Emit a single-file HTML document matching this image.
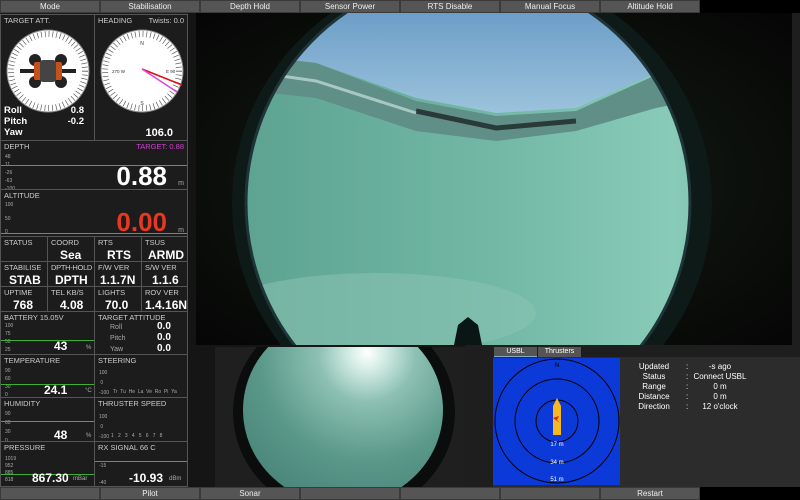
<!DOCTYPE html>
<html><head><meta charset="utf-8"><style>
*{margin:0;padding:0;box-sizing:border-box}
body{width:800px;height:500px;background:#000;position:relative;overflow:hidden;font-family:"Liberation Sans",sans-serif;color:#fff}
.a{position:absolute}
.btn{position:absolute;height:13px;background:#555;border:1px solid #3a3a3a;color:#eee;font-size:8px;text-align:center;line-height:11px}
.c{position:absolute;background:#1c1c1c;border:1px solid #555}
.l{position:absolute;left:3px;top:1px;font-size:7.5px;color:#ccc;white-space:nowrap}
.v{position:absolute;font-weight:bold;font-size:12px;color:#fff;white-space:nowrap}
.s{position:absolute;font-size:5px;color:#aaa;white-space:nowrap}
.g{position:absolute;height:1px;background:#3cb030}
</style></head><body>
<div class="btn" style="left:0;top:0;width:100px">Mode</div>
<div class="btn" style="left:100px;top:0;width:100px">Stabilisation</div>
<div class="btn" style="left:200px;top:0;width:100px">Depth Hold</div>
<div class="btn" style="left:300px;top:0;width:100px">Sensor Power</div>
<div class="btn" style="left:400px;top:0;width:100px">RTS Disable</div>
<div class="btn" style="left:500px;top:0;width:100px">Manual Focus</div>
<div class="btn" style="left:600px;top:0;width:100px">Altitude Hold</div>
<div class="btn" style="left:0;top:487px;width:100px"></div>
<div class="btn" style="left:100px;top:487px;width:100px">Pilot</div>
<div class="btn" style="left:200px;top:487px;width:100px">Sonar</div>
<div class="btn" style="left:300px;top:487px;width:100px"></div>
<div class="btn" style="left:400px;top:487px;width:100px"></div>
<div class="btn" style="left:500px;top:487px;width:100px"></div>
<div class="btn" style="left:600px;top:487px;width:100px">Restart</div>

<!-- main video -->
<div class="a" style="left:188px;top:13px;width:612px;height:334px;background:#141414"></div>
<div class="a" style="left:196px;top:13px;width:596px;height:332px;overflow:hidden;background:radial-gradient(ellipse at 50% 50%,#182018 0%,#0c100c 60%,#050505 100%)">
 <div class="a" style="left:36px;top:-45px;width:480px;height:470px;border-radius:50%;background:#0d1a18"></div>
 <svg class="a" style="left:0;top:0" width="596" height="332">
  <defs><clipPath id="cc"><ellipse cx="272" cy="190" rx="222" ry="228"/></clipPath>
  <linearGradient id="wg" x1="0" x2="1" y1="0" y2="0"><stop offset="0" stop-color="#5a9f8e"/><stop offset="0.5" stop-color="#72b8a5"/><stop offset="0.8" stop-color="#88cbb8"/><stop offset="1" stop-color="#6fb09e"/></linearGradient>
  <linearGradient id="sk" x1="0" x2="0" y1="0" y2="1"><stop offset="0" stop-color="#6d9ec8"/><stop offset="1" stop-color="#9cc3dc"/></linearGradient></defs>
  <g clip-path="url(#cc)">
   <rect x="0" y="0" width="596" height="332" fill="url(#wg)"/>
   <path d="M40 0 L560 0 L560 30 L460 60 L380 95 L300 100 L220 85 L120 50 L40 40Z" fill="url(#sk)"/>
   <path d="M30 40 L120 50 L220 88 L300 103 L380 98 L460 62 L560 30 L560 75 L460 95 L380 118 L300 128 L220 118 L120 85 L30 75Z" fill="#5f8f86"/>
   <path d="M220 98 L300 115 L380 108" stroke="#2a3a38" stroke-width="5" fill="none"/>
   <path d="M30 55 L120 68 L220 100" stroke="#a8c8c0" stroke-width="3" fill="none"/>
   <ellipse cx="180" cy="300" rx="160" ry="40" fill="#8ec4b4" opacity="0.5"/>
  </g>
  <ellipse cx="272" cy="190" rx="222" ry="228" fill="none" stroke="#1f3438" stroke-width="3"/>
  <path d="M258 332 L262 312 L272 304 L282 312 L286 332Z" fill="#0a1614"/>
 </svg>
</div>
<div class="a" style="left:792px;top:13px;width:8px;height:334px;background:#1e1e1e"></div>

<!-- small video -->
<div class="a" style="left:188px;top:345px;width:277px;height:142px;background:#151515"></div>
<div class="a" style="left:215px;top:347px;width:250px;height:140px;background:#1e1f1e;overflow:hidden">
 <div class="a" style="left:18px;top:-40px;width:222px;height:210px;border-radius:50%;background:#0b0d0d"></div>
 <div class="a" style="left:28px;top:-32px;width:200px;height:190px;border-radius:50%;background:radial-gradient(circle at 62% 20%,#ffffff 0%,#d8efe8 8%,#8cc0b2 25%,#5a988a 55%,#3f7a6e 100%)"></div>
</div>

<!-- USBL panel -->
<div class="a" style="left:465px;top:345px;width:335px;height:142px;background:#1e1e1e"></div>
<div class="a" style="left:493px;top:357px;width:307px;height:130px;background:#2c2c2c"></div>
<div class="a" style="left:494px;top:347px;width:43px;height:10px;background:#555;border-bottom:1px solid #8ab;font-size:7px;text-align:center;line-height:10px">USBL</div>
<div class="a" style="left:538px;top:347px;width:43px;height:10px;background:#555;font-size:7px;text-align:center;line-height:10px">Thrusters</div>
<svg class="a" style="left:493px;top:358px" width="127" height="127" viewBox="0 0 127 127">
 <rect width="127" height="127" fill="#0b3ad8"/>
 <g fill="none" stroke="#000" stroke-width="1"><circle cx="64" cy="63" r="62"/><circle cx="64" cy="63" r="42"/><circle cx="64" cy="63" r="21"/></g>
 <path d="M64 40 L68 48 L68 77 L60 77 L60 48 Z" fill="#f5b820"/>
 <path d="M60 60 L66 58 L64 62 L67 65 Z" fill="#e02020"/>
 <text x="64" y="9" font-size="6" fill="#000" text-anchor="middle" font-family="Liberation Sans">N</text>
 <g font-size="6" fill="#fff" text-anchor="middle" font-family="Liberation Sans"><text x="64" y="88">17 m</text><text x="64" y="106">34 m</text><text x="64" y="123">51 m</text></g>
</svg>
<div class="a" style="left:630px;top:362px;font-size:8px;line-height:10px;color:#fff;text-align:center;width:48px">Updated<br>Status<br>Range<br>Distance<br>Direction</div>
<div class="a" style="left:686px;top:362px;font-size:8px;line-height:10px;color:#fff">:<br>:<br>:<br>:<br>:</div>
<div class="a" style="left:690px;top:362px;font-size:8px;line-height:10px;color:#fff;text-align:center;width:60px;white-space:nowrap">-s ago<br>Connect USBL<br>0 m<br>0 m<br>12 o'clock</div>

<!-- left panel -->
<div class="a" style="left:0;top:13px;width:188px;height:474px;background:#1c1c1c"></div>
<div class="c" style="left:0;top:14px;width:95px;height:127px"><div class="l">TARGET ATT.</div>
 <svg class="a" style="left:5px;top:14px" width="84" height="84"><circle cx="42" cy="42" r="41" fill="#fff" stroke="#888"/><circle cx="42" cy="42" r="37" fill="none" stroke="#444" stroke-width="6" stroke-dasharray="0.6 3.2"/>
 <rect x="14" y="40" width="56" height="4" fill="#222"/><circle cx="29" cy="31" r="6" fill="#222"/><circle cx="55" cy="31" r="6" fill="#222"/><circle cx="29" cy="53" r="6" fill="#222"/><circle cx="55" cy="53" r="6" fill="#222"/><rect x="28" y="33" width="28" height="18" rx="2" fill="#c8501c"/><rect x="34" y="31" width="16" height="22" rx="3" fill="#444"/></svg>
 <div class="v" style="left:3px;top:90px;font-size:9.5px;line-height:11px">Roll<br>Pitch<br>Yaw</div>
 <div class="v" style="right:10px;top:90px;font-size:9.5px;line-height:11px;text-align:right">0.8<br>-0.2</div>
</div>
<div class="c" style="left:94px;top:14px;width:94px;height:127px"><div class="l">HEADING</div><div class="l" style="left:auto;right:3px">Twists: 0.0</div>
 <svg class="a" style="left:5px;top:14px" width="84" height="84"><circle cx="42" cy="42" r="41" fill="#fff" stroke="#888"/><circle cx="42" cy="42" r="37" fill="none" stroke="#444" stroke-width="6" stroke-dasharray="0.6 3.2"/>
 <text x="42" y="16" font-size="5" text-anchor="middle" fill="#333">N</text><text x="12" y="44" font-size="4.5" fill="#333">270 W</text><text x="66" y="44" font-size="4.5" fill="#333">E 90</text><text x="42" y="76" font-size="5" text-anchor="middle" fill="#333">S</text>
 <line x1="42" y1="40" x2="82" y2="56" stroke="#e01010" stroke-width="1.5"/><line x1="42" y1="40" x2="77" y2="63" stroke="#e040e0" stroke-width="1.5"/></svg>
 <div class="v" style="right:14px;top:112px;font-size:11px">106.0</div>
</div>
<div class="c" style="left:0;top:140px;width:188px;height:50px"><div class="l">DEPTH</div><div class="l" style="left:auto;right:3px;color:#d040d0">TARGET: 0.88</div>
 <div class="s" style="left:4px;top:12px;line-height:8px">48<br>11<br>-26<br>-63<br>-100</div>
 <div class="g" style="left:0;top:24px;width:186px"></div>
 <div class="v" style="right:20px;top:20px;font-size:26px">0.88</div><div class="s" style="right:3px;top:39px;font-size:7px">m</div></div>
<div class="c" style="left:0;top:189px;width:188px;height:48px"><div class="l">ALTITUDE</div>
 <div class="s" style="left:4px;top:12px">100</div><div class="s" style="left:4px;top:26px">50</div><div class="s" style="left:4px;top:39px">0</div>
 <div class="g" style="left:0;top:43px;width:186px"></div>
 <div class="v" style="right:20px;top:17px;font-size:26px;color:#e83820">0.00</div><div class="s" style="right:3px;top:37px;font-size:7px">m</div></div>
<div class="c" style="left:0;top:236px;width:48px;height:26px"><div class="l">STATUS</div></div>
<div class="c" style="left:47px;top:236px;width:48px;height:26px"><div class="l">COORD</div><div class="v" style="left:12px;top:11px">Sea</div></div>
<div class="c" style="left:94px;top:236px;width:48px;height:26px"><div class="l">RTS</div><div class="v" style="left:12px;top:11px">RTS</div></div>
<div class="c" style="left:141px;top:236px;width:47px;height:26px"><div class="l">TSUS</div><div class="v" style="left:6px;top:11px">ARMD</div></div>
<div class="c" style="left:0;top:261px;width:48px;height:26px"><div class="l">STABILISE</div><div class="v" style="left:8px;top:11px">STAB</div></div>
<div class="c" style="left:47px;top:261px;width:48px;height:26px"><div class="l" style="letter-spacing:-0.3px">DPTH-HOLD</div><div class="v" style="left:7px;top:11px">DPTH</div></div>
<div class="c" style="left:94px;top:261px;width:48px;height:26px"><div class="l">F/W VER</div><div class="v" style="left:5px;top:11px">1.1.7N</div></div>
<div class="c" style="left:141px;top:261px;width:47px;height:26px"><div class="l">S/W VER</div><div class="v" style="left:10px;top:11px">1.1.6</div></div>
<div class="c" style="left:0;top:286px;width:48px;height:26px"><div class="l">UPTIME</div><div class="v" style="left:12px;top:11px">768</div></div>
<div class="c" style="left:47px;top:286px;width:48px;height:26px"><div class="l">TEL KB/S</div><div class="v" style="left:12px;top:11px">4.08</div></div>
<div class="c" style="left:94px;top:286px;width:48px;height:26px"><div class="l">LIGHTS</div><div class="v" style="left:10px;top:11px">70.0</div></div>
<div class="c" style="left:141px;top:286px;width:47px;height:26px"><div class="l">ROV VER</div><div class="v" style="left:3px;top:11px">1.4.16N</div></div>
<div class="c" style="left:0;top:311px;width:95px;height:44px"><div class="l">BATTERY 15.05V</div>
 <div class="s" style="left:4px;top:10px;line-height:8px">100<br>75<br>50<br>25<br>0</div><div class="g" style="left:0;top:28px;width:93px"></div>
 <div class="v" style="left:53px;top:27px">43</div><div class="s" style="left:85px;top:33px;font-size:6px">%</div></div>
<div class="c" style="left:94px;top:311px;width:94px;height:44px"><div class="l">TARGET ATTITUDE</div>
 <div class="s" style="left:15px;top:10px;font-size:7px;line-height:11px">Roll<br>Pitch<br>Yaw</div>
 <div class="v" style="left:62px;top:9px;font-size:10px;line-height:11px">0.0<br>0.0<br>0.0</div></div>
<div class="c" style="left:0;top:354px;width:95px;height:44px"><div class="l">TEMPERATURE</div>
 <div class="s" style="left:4px;top:12px;line-height:8px">90<br>60<br>30<br>0</div><div class="g" style="left:0;top:29px;width:93px"></div>
 <div class="v" style="left:43px;top:28px">24.1</div><div class="s" style="left:84px;top:33px;font-size:6px">°C</div></div>
<div class="c" style="left:94px;top:354px;width:94px;height:44px"><div class="l">STEERING</div>
 <div class="s" style="left:4px;top:13px;line-height:10px">100<br>&nbsp;0<br>-100</div><div class="s" style="left:18px;top:34px">Tr&nbsp; Tu&nbsp; He&nbsp; La&nbsp; Ve&nbsp; Ro&nbsp; Pi&nbsp; Ya</div></div>
<div class="c" style="left:0;top:397px;width:95px;height:45px"><div class="l">HUMIDITY</div>
 <div class="s" style="left:4px;top:12px;line-height:9px">90<br>60<br>30<br>0</div><div class="g" style="left:0;top:23px;width:93px"></div>
 <div class="v" style="left:53px;top:30px">48</div><div class="s" style="left:85px;top:35px;font-size:6px">%</div></div>
<div class="c" style="left:94px;top:397px;width:94px;height:45px"><div class="l">THRUSTER SPEED</div>
 <div class="s" style="left:4px;top:14px;line-height:10px">100<br>&nbsp;0<br>-100</div><div class="s" style="left:16px;top:35px">1&nbsp;&nbsp; 2&nbsp;&nbsp; 3&nbsp;&nbsp; 4&nbsp;&nbsp; 5&nbsp;&nbsp; 6&nbsp;&nbsp; 7&nbsp;&nbsp; 8</div></div>
<div class="c" style="left:0;top:441px;width:95px;height:46px"><div class="l">PRESSURE</div>
 <div class="s" style="left:4px;top:14px;line-height:7px">1019<br>952<br>885<br>818</div><div class="g" style="left:0;top:32px;width:93px"></div>
 <div class="v" style="left:31px;top:29px">867.30</div><div class="s" style="left:72px;top:34px;font-size:6px">mBar</div></div>
<div class="c" style="left:94px;top:441px;width:94px;height:46px"><div class="l">RX SIGNAL 66 C</div>
 <div class="s" style="left:4px;top:21px">-15</div><div class="s" style="left:4px;top:38px">-40</div><div class="g" style="left:0;top:19px;width:92px"></div>
 <div class="v" style="left:34px;top:29px">-10.93</div><div class="s" style="left:74px;top:34px;font-size:6px">dBm</div></div>
</body></html>
